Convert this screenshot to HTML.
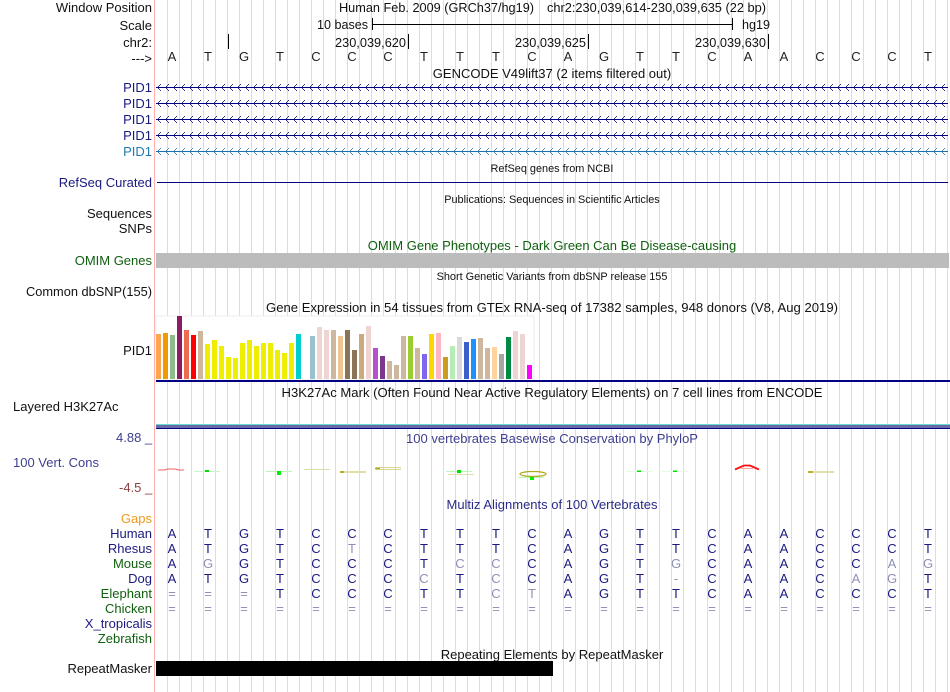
<!DOCTYPE html>
<html><head><meta charset="utf-8"><style>
html,body{margin:0;padding:0;background:#fff;width:950px;height:692px;overflow:hidden}
svg{display:block}
text{font-family:"Liberation Sans",sans-serif;font-size:13px;fill:#111}
.e{text-anchor:end}.m{text-anchor:middle}
.s{font-size:10.9px}
.n{fill:#1a1a80}.g{fill:#0e5f0e}.l{fill:#3f3f8f}
.b text{text-anchor:middle;fill:#1a1a80}
.b .q{fill:#9090b8}
.h text{text-anchor:middle;fill:#222}
</style></head><body>
<svg width="950" height="692" viewBox="0 0 950 692" xmlns="http://www.w3.org/2000/svg" shape-rendering="crispEdges">
<defs>
<pattern id="grid" x="167" y="0" width="12" height="10" patternUnits="userSpaceOnUse"><rect width="1" height="10" fill="#dcdaf2"/></pattern>
<pattern id="ar" x="156" y="0" width="8" height="16" patternUnits="userSpaceOnUse"><rect x="0" y="7" width="8" height="1" fill="#000080"/><path d="M2 6h1v1H2zM3 5h1v1H3zM4 4h1v1H4zM2 8h1v1H2zM3 9h1v1H3zM4 10h1v1H4z" fill="#30308f"/></pattern>
<pattern id="ar2" x="156" y="0" width="8" height="16" patternUnits="userSpaceOnUse"><rect x="0" y="7" width="8" height="1" fill="#1f6fa8"/><path d="M2 6h1v1H2zM3 5h1v1H3zM4 4h1v1H4zM2 8h1v1H2zM3 9h1v1H3zM4 10h1v1H4z" fill="#3f8cc0"/></pattern>
</defs>
<rect x="156" y="0" width="794" height="692" fill="url(#grid)"/>
<rect x="154" y="0" width="1" height="692" fill="#ffb0b0"/>

<!-- Left labels -->
<text class="e" x="152" y="12">Window Position</text>
<text class="e" x="152" y="30">Scale</text>
<text class="e" x="152" y="47">chr2:</text>
<text class="e" x="152" y="63">---&gt;</text>
<text class="e n" x="152" y="92">PID1</text>
<text class="e n" x="152" y="108">PID1</text>
<text class="e n" x="152" y="124">PID1</text>
<text class="e n" x="152" y="140">PID1</text>
<text class="e" x="152" y="156" style="fill:#1f78b4">PID1</text>
<text class="e n" x="152" y="187">RefSeq Curated</text>
<text class="e" x="152" y="218">Sequences</text>
<text class="e" x="152" y="233">SNPs</text>
<text class="e g" x="152" y="265">OMIM Genes</text>
<text class="e" x="152" y="296" textLength="126" lengthAdjust="spacingAndGlyphs">Common dbSNP(155)</text>
<text class="e" x="152" y="355">PID1</text>
<text x="13" y="411">Layered H3K27Ac</text>
<text class="l" x="13" y="467">100 Vert. Cons</text>
<text class="l" x="116" y="442">4.88 _</text>
<text x="119" y="492" style="fill:#8f3f3f">-4.5 _</text>
<text class="e" x="152" y="523" style="fill:#ef9a20">Gaps</text>
<text class="e n" x="152" y="538">Human</text>
<text class="e n" x="152" y="553">Rhesus</text>
<text class="e g" x="152" y="568">Mouse</text>
<text class="e n" x="152" y="583">Dog</text>
<text class="e g" x="152" y="598">Elephant</text>
<text class="e g" x="152" y="613">Chicken</text>
<text class="e n" x="152" y="628">X_tropicalis</text>
<text class="e g" x="152" y="643">Zebrafish</text>
<text class="e" x="152" y="673">RepeatMasker</text>

<!-- Header -->
<text x="339" y="12" textLength="195" lengthAdjust="spacingAndGlyphs">Human Feb. 2009 (GRCh37/hg19)</text>
<text x="547" y="12" textLength="219" lengthAdjust="spacingAndGlyphs">chr2:230,039,614-230,039,635 (22 bp)</text>
<text x="317" y="29" textLength="51" lengthAdjust="spacingAndGlyphs">10 bases</text>
<text x="742" y="29" textLength="28" lengthAdjust="spacingAndGlyphs">hg19</text>
<rect x="372" y="24" width="361" height="1" fill="#000"/>
<path d="M372 18h1v12h-1zM732 18h1v12h-1zM228 34h1v15h-1zM408 34h1v15h-1zM588 34h1v15h-1zM768 34h1v15h-1z" fill="#000"/>
<text x="335" y="47" textLength="71" lengthAdjust="spacingAndGlyphs">230,039,620</text>
<text x="515" y="47" textLength="71" lengthAdjust="spacingAndGlyphs">230,039,625</text>
<text x="695" y="47" textLength="71" lengthAdjust="spacingAndGlyphs">230,039,630</text>
<g class="h">
<text x="172" y="61">A</text><text x="208" y="61">T</text><text x="244" y="61">G</text><text x="280" y="61">T</text><text x="316" y="61">C</text><text x="352" y="61">C</text><text x="388" y="61">C</text><text x="424" y="61">T</text><text x="460" y="61">T</text><text x="496" y="61">T</text><text x="532" y="61">C</text><text x="568" y="61">A</text><text x="604" y="61">G</text><text x="640" y="61">T</text><text x="676" y="61">T</text><text x="712" y="61">C</text><text x="748" y="61">A</text><text x="784" y="61">A</text><text x="820" y="61">C</text><text x="856" y="61">C</text><text x="892" y="61">C</text><text x="928" y="61">T</text>
</g>
<text class="m" x="552" y="78">GENCODE V49lift37 (2 items filtered out)</text>

<!-- Genes -->
<rect x="156" y="80" width="792" height="16" fill="url(#ar)"/>
<rect x="156" y="96" width="792" height="16" fill="url(#ar)"/>
<rect x="156" y="112" width="792" height="16" fill="url(#ar)"/>
<rect x="156" y="128" width="792" height="16" fill="url(#ar)"/>
<rect x="156" y="144" width="792" height="16" fill="url(#ar2)"/>

<text class="m s" x="552" y="172">RefSeq genes from NCBI</text>
<rect x="157" y="182" width="791" height="1" fill="#000080"/>
<text class="m s" x="552" y="203">Publications: Sequences in Scientific Articles</text>
<text class="m g" x="552" y="250">OMIM Gene Phenotypes - Dark Green Can Be Disease-causing</text>
<rect x="156" y="253" width="793" height="15" fill="#bcbcbc"/>
<text class="m s" x="552" y="280">Short Genetic Variants from dbSNP release 155</text>
<text class="m" x="552" y="312" textLength="572" lengthAdjust="spacingAndGlyphs">Gene Expression in 54 tissues from GTEx RNA-seq of 17382 samples, 948 donors (V8, Aug 2019)</text>

<!-- GTEx -->
<rect x="156" y="316" width="378" height="64" fill="#fff" stroke="#eeeeee"/>
<rect x="156" y="334" width="5" height="45" fill="#FFA54F"/>
<rect x="163" y="333" width="5" height="46" fill="#EE9A00"/>
<rect x="170" y="335" width="5" height="44" fill="#8FBC8F"/>
<rect x="177" y="316" width="5" height="63" fill="#8B1C62"/>
<rect x="184" y="330" width="5" height="49" fill="#EE6A50"/>
<rect x="191" y="335" width="5" height="44" fill="#FF0000"/>
<rect x="198" y="331" width="5" height="48" fill="#CDB79E"/>
<rect x="205" y="344" width="5" height="35" fill="#EEEE00"/>
<rect x="212" y="340" width="5" height="39" fill="#EEEE00"/>
<rect x="219" y="346" width="5" height="33" fill="#EEEE00"/>
<rect x="226" y="357" width="5" height="22" fill="#EEEE00"/>
<rect x="233" y="358" width="5" height="21" fill="#EEEE00"/>
<rect x="240" y="343" width="5" height="36" fill="#EEEE00"/>
<rect x="247" y="340" width="5" height="39" fill="#EEEE00"/>
<rect x="254" y="346" width="5" height="33" fill="#EEEE00"/>
<rect x="261" y="343" width="5" height="36" fill="#EEEE00"/>
<rect x="268" y="343" width="5" height="36" fill="#EEEE00"/>
<rect x="275" y="350" width="5" height="29" fill="#EEEE00"/>
<rect x="282" y="353" width="5" height="26" fill="#EEEE00"/>
<rect x="289" y="343" width="5" height="36" fill="#EEEE00"/>
<rect x="296" y="334" width="5" height="45" fill="#00CDCD"/>
<rect x="310" y="336" width="5" height="43" fill="#9AC0CD"/>
<rect x="317" y="327" width="5" height="52" fill="#EED5D2"/>
<rect x="324" y="330" width="5" height="49" fill="#EED5D2"/>
<rect x="331" y="330" width="5" height="49" fill="#CDB79E"/>
<rect x="338" y="336" width="5" height="43" fill="#EEC591"/>
<rect x="345" y="330" width="5" height="49" fill="#8B7355"/>
<rect x="352" y="350" width="5" height="29" fill="#8B7355"/>
<rect x="359" y="334" width="5" height="45" fill="#CDAA7D"/>
<rect x="366" y="326" width="5" height="53" fill="#EED5D2"/>
<rect x="373" y="348" width="5" height="31" fill="#B452CD"/>
<rect x="380" y="356" width="5" height="23" fill="#7A378B"/>
<rect x="387" y="361" width="5" height="18" fill="#CDB79E"/>
<rect x="394" y="365" width="5" height="14" fill="#CDB79E"/>
<rect x="401" y="336" width="5" height="43" fill="#CDB79E"/>
<rect x="408" y="336" width="5" height="43" fill="#9ACD32"/>
<rect x="415" y="348" width="5" height="31" fill="#CDB79E"/>
<rect x="422" y="354" width="5" height="25" fill="#7B68EE"/>
<rect x="429" y="334" width="5" height="45" fill="#FFD700"/>
<rect x="436" y="333" width="5" height="46" fill="#FFB6C1"/>
<rect x="443" y="357" width="5" height="22" fill="#CD9B1D"/>
<rect x="450" y="346" width="5" height="33" fill="#B4EEB4"/>
<rect x="457" y="337" width="5" height="42" fill="#D9D9D9"/>
<rect x="464" y="342" width="5" height="37" fill="#3A5FCD"/>
<rect x="471" y="339" width="5" height="40" fill="#1E90FF"/>
<rect x="478" y="338" width="5" height="41" fill="#CDB79E"/>
<rect x="485" y="348" width="5" height="31" fill="#CDB79E"/>
<rect x="492" y="347" width="5" height="32" fill="#FFD39B"/>
<rect x="499" y="354" width="5" height="25" fill="#A6A6A6"/>
<rect x="506" y="337" width="5" height="42" fill="#008B45"/>
<rect x="513" y="331" width="5" height="48" fill="#EED5D2"/>
<rect x="520" y="334" width="5" height="45" fill="#EED5D2"/>
<rect x="527" y="365" width="5" height="14" fill="#FF00FF"/>
<rect x="156" y="380" width="794" height="2" fill="#000080"/>

<text class="m" x="552" y="397" textLength="541" lengthAdjust="spacingAndGlyphs">H3K27Ac Mark (Often Found Near Active Regulatory Elements) on 7 cell lines from ENCODE</text>
<rect x="156" y="424" width="794" height="1" fill="#66ddcc"/>
<rect x="156" y="425" width="794" height="3" fill="#6a6aa8"/>
<rect x="156" y="428" width="794" height="1" fill="#000080"/>

<text class="m l" x="552" y="443">100 vertebrates Basewise Conservation by PhyloP</text>

<!-- PhyloP -->
<g shape-rendering="auto">
<path d="M158 470h6l4-1h7l4 1h5" stroke="#f06060" fill="none"/>
<rect x="194" y="471" width="26" height="1" fill="#c8f8c8"/><rect x="205" y="470" width="4" height="2" fill="#00e000"/>
<rect x="266" y="471" width="26" height="1" fill="#b8f8b8"/><rect x="277" y="471" width="4" height="4" fill="#00ee00"/>
<rect x="304" y="469" width="26" height="1" fill="#ddddaa"/>
<rect x="340" y="471" width="26" height="2" fill="#dfdfa8"/><rect x="340" y="471" width="4" height="2" fill="#b8b030"/>
<path d="M376 467.500h25M376 469.500h25" stroke="#cfc870" stroke-width=".8" fill="none"/><path d="M375 468.500h5" stroke="#b0a820" stroke-width="1.500" fill="none"/>
<rect x="446" y="471" width="26" height="1" fill="#b8f8b8"/><rect x="457" y="470" width="4" height="3" fill="#00e000"/>
<rect x="448" y="474" width="26" height="1" fill="#dfdfa8"/>
<ellipse cx="533" cy="474" rx="13" ry="2.500" stroke="#b0a820" stroke-width="1.200" fill="none"/>
<rect x="518" y="477" width="26" height="1" fill="#b8f8b8"/><rect x="530" y="477" width="4" height="3" fill="#00ee00"/>
<rect x="626" y="471" width="26" height="1" fill="#e4fbe4"/><rect x="637" y="470.500" width="4" height="1.500" fill="#00e000"/>
<rect x="662" y="471" width="26" height="1" fill="#e4fbe4"/><rect x="673" y="470.500" width="4" height="1.500" fill="#00e000"/>
<path d="M735 469.500l9-4h6l9 4" stroke="#ff1010" stroke-width="1.800" fill="none"/><path d="M741 468.500h12" stroke="#ffa0a0" fill="none"/>
<rect x="808" y="471" width="26" height="2" fill="#dfdfa8"/><rect x="808" y="471" width="5" height="2" fill="#b8b030"/>
</g>

<text class="m l" x="552" y="509" style="fill:#2a2a88">Multiz Alignments of 100 Vertebrates</text>

<!-- Alignment -->
<g class="b">
<text x="172" y="538">A</text><text x="208" y="538">T</text><text x="244" y="538">G</text><text x="280" y="538">T</text><text x="316" y="538">C</text><text x="352" y="538">C</text><text x="388" y="538">C</text><text x="424" y="538">T</text><text x="460" y="538">T</text><text x="496" y="538">T</text><text x="532" y="538">C</text><text x="568" y="538">A</text><text x="604" y="538">G</text><text x="640" y="538">T</text><text x="676" y="538">T</text><text x="712" y="538">C</text><text x="748" y="538">A</text><text x="784" y="538">A</text><text x="820" y="538">C</text><text x="856" y="538">C</text><text x="892" y="538">C</text><text x="928" y="538">T</text>
<text x="172" y="553">A</text><text x="208" y="553">T</text><text x="244" y="553">G</text><text x="280" y="553">T</text><text x="316" y="553">C</text><text class="q" x="352" y="553">T</text><text x="388" y="553">C</text><text x="424" y="553">T</text><text x="460" y="553">T</text><text x="496" y="553">T</text><text x="532" y="553">C</text><text x="568" y="553">A</text><text x="604" y="553">G</text><text x="640" y="553">T</text><text x="676" y="553">T</text><text x="712" y="553">C</text><text x="748" y="553">A</text><text x="784" y="553">A</text><text x="820" y="553">C</text><text x="856" y="553">C</text><text x="892" y="553">C</text><text x="928" y="553">T</text>
<text x="172" y="568">A</text><text class="q" x="208" y="568">G</text><text x="244" y="568">G</text><text x="280" y="568">T</text><text x="316" y="568">C</text><text x="352" y="568">C</text><text x="388" y="568">C</text><text x="424" y="568">T</text><text class="q" x="460" y="568">C</text><text class="q" x="496" y="568">C</text><text x="532" y="568">C</text><text x="568" y="568">A</text><text x="604" y="568">G</text><text x="640" y="568">T</text><text class="q" x="676" y="568">G</text><text x="712" y="568">C</text><text x="748" y="568">A</text><text x="784" y="568">A</text><text x="820" y="568">C</text><text x="856" y="568">C</text><text class="q" x="892" y="568">A</text><text class="q" x="928" y="568">G</text>
<text x="172" y="583">A</text><text x="208" y="583">T</text><text x="244" y="583">G</text><text x="280" y="583">T</text><text x="316" y="583">C</text><text x="352" y="583">C</text><text x="388" y="583">C</text><text class="q" x="424" y="583">C</text><text x="460" y="583">T</text><text class="q" x="496" y="583">C</text><text x="532" y="583">C</text><text x="568" y="583">A</text><text x="604" y="583">G</text><text x="640" y="583">T</text><text class="q" x="676" y="583">-</text><text x="712" y="583">C</text><text x="748" y="583">A</text><text x="784" y="583">A</text><text x="820" y="583">C</text><text class="q" x="856" y="583">A</text><text class="q" x="892" y="583">G</text><text x="928" y="583">T</text>
<text class="q" x="172" y="598">=</text><text class="q" x="208" y="598">=</text><text class="q" x="244" y="598">=</text><text x="280" y="598">T</text><text x="316" y="598">C</text><text x="352" y="598">C</text><text x="388" y="598">C</text><text x="424" y="598">T</text><text x="460" y="598">T</text><text class="q" x="496" y="598">C</text><text class="q" x="532" y="598">T</text><text x="568" y="598">A</text><text x="604" y="598">G</text><text x="640" y="598">T</text><text x="676" y="598">T</text><text x="712" y="598">C</text><text x="748" y="598">A</text><text x="784" y="598">A</text><text x="820" y="598">C</text><text x="856" y="598">C</text><text x="892" y="598">C</text><text x="928" y="598">T</text>
<text class="q" x="172" y="613">=</text><text class="q" x="208" y="613">=</text><text class="q" x="244" y="613">=</text><text class="q" x="280" y="613">=</text><text class="q" x="316" y="613">=</text><text class="q" x="352" y="613">=</text><text class="q" x="388" y="613">=</text><text class="q" x="424" y="613">=</text><text class="q" x="460" y="613">=</text><text class="q" x="496" y="613">=</text><text class="q" x="532" y="613">=</text><text class="q" x="568" y="613">=</text><text class="q" x="604" y="613">=</text><text class="q" x="640" y="613">=</text><text class="q" x="676" y="613">=</text><text class="q" x="712" y="613">=</text><text class="q" x="748" y="613">=</text><text class="q" x="784" y="613">=</text><text class="q" x="820" y="613">=</text><text class="q" x="856" y="613">=</text><text class="q" x="892" y="613">=</text><text class="q" x="928" y="613">=</text>
</g>

<text class="m" x="552" y="659">Repeating Elements by RepeatMasker</text>
<rect x="156" y="661" width="397" height="15" fill="#000"/>
</svg>
</body></html>
